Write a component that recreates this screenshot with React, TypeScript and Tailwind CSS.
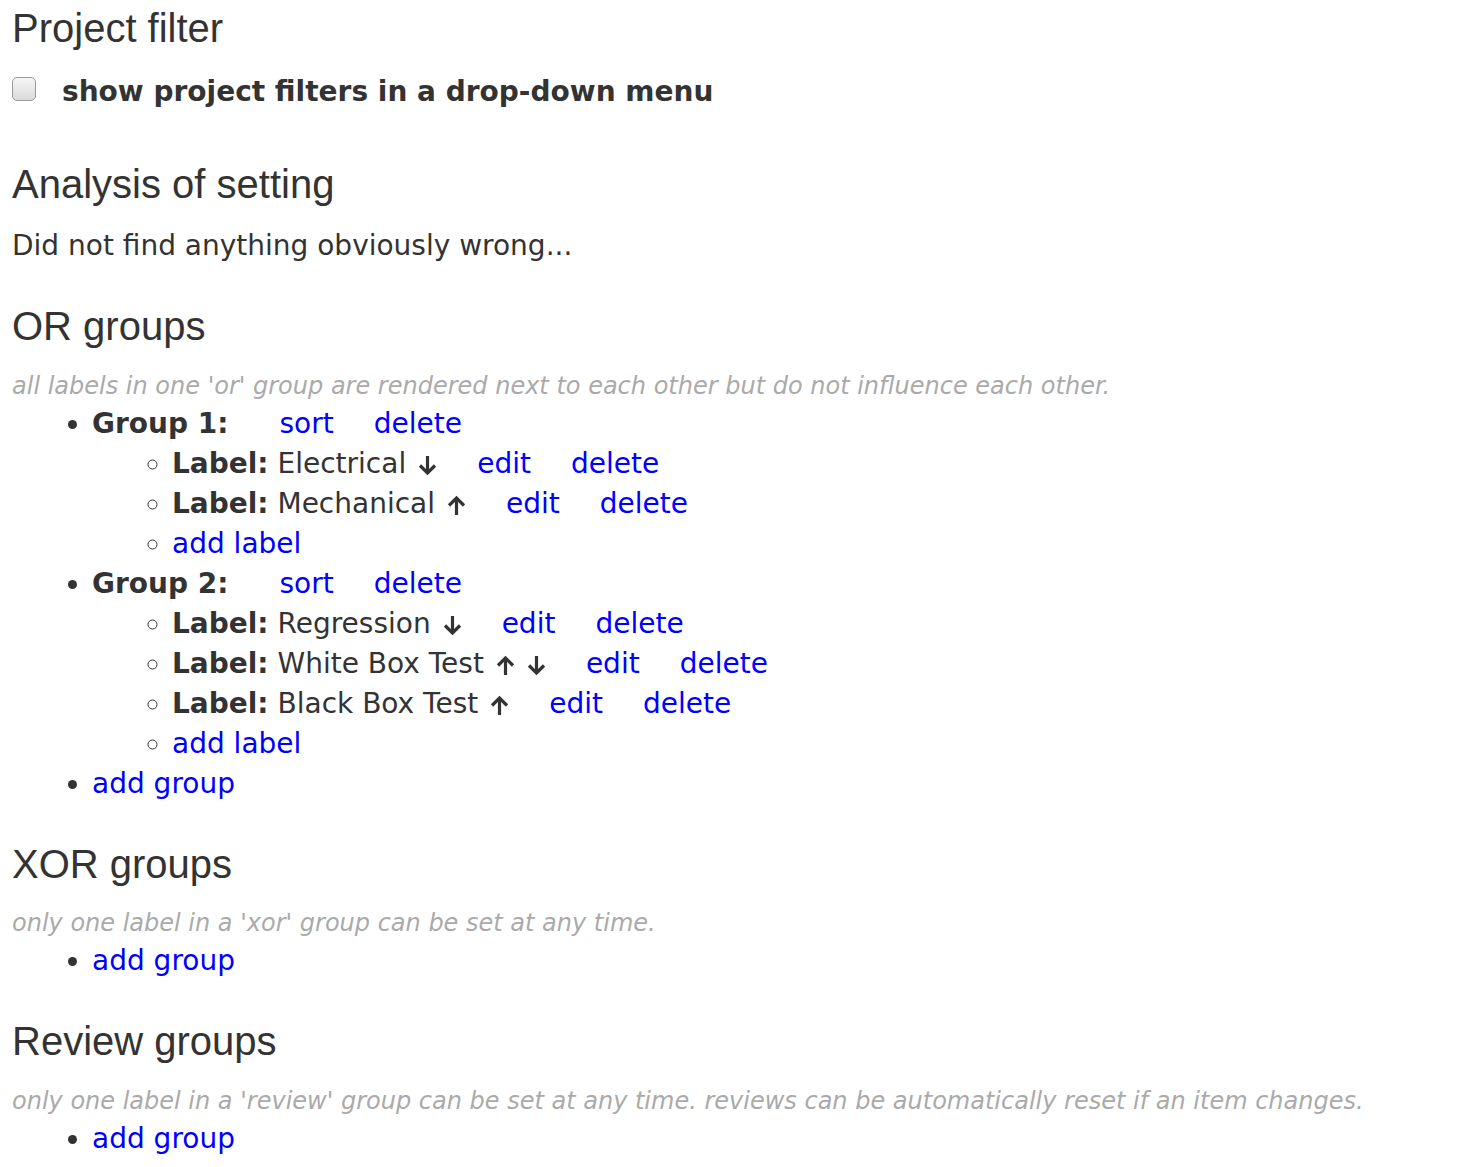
import React from "react";

const Arrow = ({ dir }: { dir: "up" | "down" }) => (
  <svg
    width="19"
    height="21"
    viewBox="0 0 19 21"
    className="inline-block align-[-3px]"
    fill="none"
    stroke="#333"
    strokeWidth="3.2"
    strokeLinecap="butt"
    strokeLinejoin="miter"
  >
    {dir === "down" ? (
      <>
        <path d="M9.5 1 V18" />
        <path d="M2 10.5 L9.5 18 L17 10.5" />
      </>
    ) : (
      <>
        <path d="M9.5 20 V3" />
        <path d="M2 10.5 L9.5 3 L17 10.5" />
      </>
    )}
  </svg>
);

const A = ({ children, first }: { children: React.ReactNode; first?: boolean }) => (
  <a href="#" className={`text-[#0000ff] ${first ? "ml-[51px]" : "ml-[40px]"}`}>
    {children}
  </a>
);

type Lbl = { name: string; arrows: ("up" | "down")[] };

const LabelItem = ({ l }: { l: Lbl }) => (
  <li>
    <b className="font-bold">Label:</b> {l.name}
    {l.arrows.map((a, i) => (
      <span key={i} className={i === 0 ? "ml-[12px]" : "ml-[12px]"}>
        <Arrow dir={a} />
      </span>
    ))}
    <A>edit</A>
    <A>delete</A>
  </li>
);

const H = ({ children, className = "" }: { children: React.ReactNode; className?: string }) => (
  <h2
    className={`text-[40px] leading-[44px] font-normal text-[#333] ${className}`}
    style={{ fontFamily: '"Liberation Sans", Arial, sans-serif' }}
  >
    {children}
  </h2>
);

const Note = ({ children, className = "" }: { children: React.ReactNode; className?: string }) => (
  <p className={`italic text-[24px] leading-[32px] text-[#aaa] ${className}`}>{children}</p>
);

export default function App() {
  const g1: Lbl[] = [
    { name: "Electrical", arrows: ["down"] },
    { name: "Mechanical", arrows: ["up"] },
  ];
  const g2: Lbl[] = [
    { name: "Regression", arrows: ["down"] },
    { name: "White Box Test", arrows: ["up", "down"] },
    { name: "Black Box Test", arrows: ["up"] },
  ];
  return (
    <div
      className="bg-white min-h-screen pl-[12px] text-[#333] text-[28px] leading-[40px]"
      style={{ fontFamily: '"DejaVu Sans", Verdana, sans-serif' }}
    >
      <H className="pt-[6px]">Project filter</H>
      <label className="flex items-center mt-[22px]">
        <input
          type="checkbox"
          className="appearance-none w-[24px] h-[24px] m-0 -mt-[6px] rounded-[5px] border border-[#999] bg-gradient-to-b from-[#f6f6f6] to-[#dadada]"
        />
        <b className="ml-[26px] font-bold">show project filters in a drop-down menu</b>
      </label>

      <H className="mt-[50px]">Analysis of setting</H>
      <p className="mt-[20px]">Did not find anything obviously wrong...</p>

      <H className="mt-[38px]">OR groups</H>
      <Note className="mt-[22px]">
        all labels in one 'or' group are rendered next to each other but do not influence each other.
      </Note>
      <ul className="list-disc pl-[80px] mt-[2px]">
        <li>
          <b className="font-bold">Group 1:</b>
          <A first>sort</A>
          <A>delete</A>
          <ul className="list-[circle] pl-[80px]">
            {g1.map((l) => (
              <LabelItem key={l.name} l={l} />
            ))}
            <li>
              <a href="#" className="text-[#0000ff]">add label</a>
            </li>
          </ul>
        </li>
        <li>
          <b className="font-bold">Group 2:</b>
          <A first>sort</A>
          <A>delete</A>
          <ul className="list-[circle] pl-[80px]">
            {g2.map((l) => (
              <LabelItem key={l.name} l={l} />
            ))}
            <li>
              <a href="#" className="text-[#0000ff]">add label</a>
            </li>
          </ul>
        </li>
        <li>
          <a href="#" className="text-[#0000ff]">add group</a>
        </li>
      </ul>

      <H className="mt-[38px]">XOR groups</H>
      <Note className="mt-[21px]">only one label in a 'xor' group can be set at any time.</Note>
      <ul className="list-disc pl-[80px] mt-[2px]">
        <li>
          <a href="#" className="text-[#0000ff]">add group</a>
        </li>
      </ul>

      <H className="mt-[38px]">Review groups</H>
      <Note className="mt-[22px]">
        only one label in a 'review' group can be set at any time. reviews can be automatically reset if an item changes.
      </Note>
      <ul className="list-disc pl-[80px] mt-[2px]">
        <li>
          <a href="#" className="text-[#0000ff]">add group</a>
        </li>
      </ul>
    </div>
  );
}
